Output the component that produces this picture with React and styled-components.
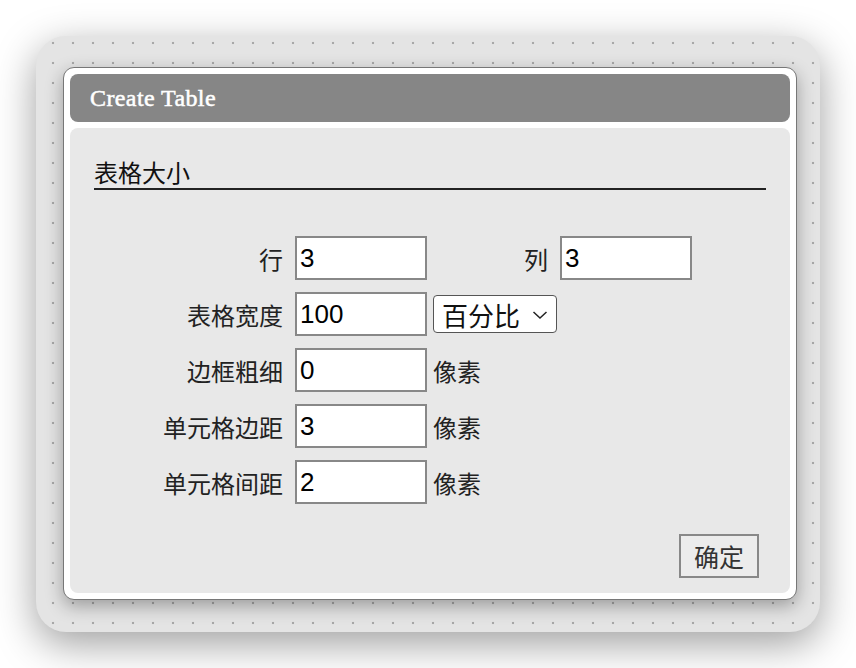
import styled, { createGlobalStyle } from "styled-components";

const GlobalStyle = createGlobalStyle`
    html, body {
        margin: 0;
        padding: 0;
        background: #ffffff;
    }
    body {
        font-family: "Liberation Sans", "Noto Sans CJK SC", sans-serif;
    }
`;

const Page = styled.div`
    width: 856px;
    height: 668px;
    padding: 36px;
    box-sizing: border-box;
`;

const Frame = styled.div`
    width: 784px;
    height: 596px;
    box-sizing: border-box;
    padding: 31px 23px 32px 27px;
    border-radius: 30px;
    background-color: #e4e4e4;
    background-image: radial-gradient(circle, #a8a8a8 1.1px, transparent 1.6px);
    background-size: 20px 20px;
    background-position: 7px 17px;
    box-shadow: 0 12px 40px rgba(0, 0, 0, 0.38);
`;

const Dialog = styled.div`
    width: 734px;
    height: 533px;
    box-sizing: border-box;
    padding: 6px;
    display: flex;
    flex-direction: column;
    gap: 6px;
    background: #ffffff;
    border: 1px solid #777;
    border-radius: 11px;
    box-shadow: 0 6px 18px rgba(0, 0, 0, 0.32);
`;

const TitleBar = styled.div`
    height: 48px;
    flex-shrink: 0;
    display: flex;
    align-items: center;
    padding-left: 20px;
    border-radius: 8px;
    background: #868686;
    color: #ffffff;
    font-family: "Liberation Serif", "DejaVu Serif", serif;
    font-size: 24px;
    letter-spacing: 0.4px;
    -webkit-text-stroke: 0.5px #ffffff;
`;

const Body = styled.div`
    flex: 1;
    display: flex;
    flex-direction: column;
    padding: 0 24px;
    border-radius: 8px;
    background: #e8e8e8;
`;

const SectionTitle = styled.div`
    padding-top: 30px;
    padding-bottom: 2px;
    line-height: 28px;
    font-size: 24px;
    color: #111;
    font-family: "Noto Sans CJK SC", sans-serif;
    border-bottom: 2px solid #222;
`;

const FormGrid = styled.div`
    margin-top: 46px;
    display: grid;
    grid-template-columns: 201px 132px 133px 132px;
    grid-auto-rows: 44px;
    row-gap: 12px;
    align-items: center;
`;

const Label = styled.label`
    text-align: right;
    padding-right: 12px;
    font-family: "Noto Sans CJK SC", sans-serif;
    font-size: 24px;
    color: #222;
`;

const Unit = styled.span`
    padding-left: 6px;
    font-family: "Noto Sans CJK SC", sans-serif;
    font-size: 24px;
    color: #222;
`;

const Input = styled.input`
    width: 132px;
    height: 44px;
    box-sizing: border-box;
    padding: 0 3px;
    border: 2px solid #888;
    background: #ffffff;
    font-family: "Liberation Sans", sans-serif;
    font-size: 26px;
    color: #000;
    outline: none;
`;

const SelectWrap = styled.span`
    position: relative;
    margin-left: 6px;
    width: 124px;
    height: 38px;
    display: block;
`;

const Select = styled.select`
    appearance: none;
    width: 124px;
    height: 38px;
    box-sizing: border-box;
    padding: 0 0 0 8px;
    border: 1.5px solid #555;
    border-radius: 4px;
    background: #ffffff;
    font-family: "Noto Sans CJK SC", sans-serif;
    font-size: 26px;
    color: #111;
    outline: none;
`;

const Chevron = styled.svg`
    position: absolute;
    right: 9px;
    top: 15px;
    pointer-events: none;
`;

const Footer = styled.div`
    margin-top: 30px;
    display: flex;
    justify-content: flex-end;
    padding-right: 7px;
`;

const Button = styled.button`
    width: 80px;
    height: 44px;
    box-sizing: border-box;
    border: 2px solid #888;
    background: #ececec;
    font-family: "Noto Sans CJK SC", sans-serif;
    font-size: 25px;
    color: #333;
    padding: 0;
    cursor: pointer;
`;

const unitRows = [
    { label: "边框粗细", value: "0" },
    { label: "单元格边距", value: "3" },
    { label: "单元格间距", value: "2" },
];

export default function App() {
    return (
        <>
            <GlobalStyle />
            <Page>
                <Frame>
                    <Dialog>
                        <TitleBar>Create Table</TitleBar>
                        <Body>
                            <SectionTitle>表格大小</SectionTitle>
                            <FormGrid>
                                <Label>行</Label>
                                <Input defaultValue="3" />
                                <Label>列</Label>
                                <Input defaultValue="3" />

                                <Label>表格宽度</Label>
                                <Input defaultValue="100" />
                                <SelectWrap>
                                    <Select defaultValue="percent">
                                        <option value="percent">百分比</option>
                                        <option value="pixel">像素</option>
                                    </Select>
                                    <Chevron width="16" height="10" viewBox="0 0 16 10">
                                        <path d="M1.5 2 L8 8 L14.5 2" fill="none" stroke="#222" strokeWidth="1.5" />
                                    </Chevron>
                                </SelectWrap>
                                <span />

                                {unitRows.map((row) => [
                                    <Label key={row.label + "l"}>{row.label}</Label>,
                                    <Input key={row.label + "i"} defaultValue={row.value} />,
                                    <Unit key={row.label + "u"}>像素</Unit>,
                                    <span key={row.label + "s"} />,
                                ])}
                            </FormGrid>
                            <Footer>
                                <Button>确定</Button>
                            </Footer>
                        </Body>
                    </Dialog>
                </Frame>
            </Page>
        </>
    );
}
